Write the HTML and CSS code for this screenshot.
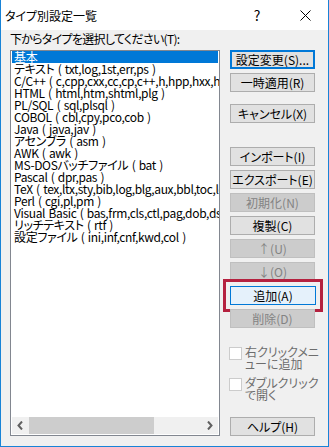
FILE: index.html
```html
<!DOCTYPE html>
<html lang="ja">
<head>
    <meta charset="UTF-8">
    <title>タイプ別設定一覧</title>
    <link rel="stylesheet" href="styles.css">
</head>
<body>
<div class="dialog">
    <div class="titlebar">
        <span class="title">タイプ別設定一覧</span>
        <span class="title-help">?</span>
        <span class="title-close">
            <svg width="11" height="11" viewBox="0 0 11 11"><path d="M0.5 0.5 L10.5 10.5 M10.5 0.5 L0.5 10.5" stroke="#000" stroke-width="1" fill="none"/></svg>
        </span>
    </div>

    <div class="content">
        <div class="left">
            <div class="label">下からタイプを選択してください(T):</div>
            <div class="listbox">
                <ul class="items">
                    <li class="selected">基本</li>
                    <li>テキスト ( txt,log,1st,err,ps )</li>
                    <li>C/C++ ( c,cpp,cxx,cc,cp,c++,h,hpp,hxx,hh,inl )</li>
                    <li>HTML ( html,htm,shtml,plg )</li>
                    <li>PL/SQL ( sql,plsql )</li>
                    <li>COBOL ( cbl,cpy,pco,cob )</li>
                    <li>Java ( java,jav )</li>
                    <li>アセンブラ ( asm )</li>
                    <li>AWK ( awk )</li>
                    <li>MS-DOSバッチファイル ( bat )</li>
                    <li>Pascal ( dpr,pas )</li>
                    <li>TeX ( tex,ltx,sty,bib,log,blg,aux,bbl,toc,lof,lot )</li>
                    <li>Perl ( cgi,pl,pm )</li>
                    <li>Visual Basic ( bas,frm,cls,ctl,pag,dob,dsr )</li>
                    <li>リッチテキスト ( rtf )</li>
                    <li>設定ファイル ( ini,inf,cnf,kwd,col )</li>
                </ul>
                <div class="hscroll">
                    <span class="arrow">
                        <svg width="7" height="9" viewBox="0 0 7 9"><path d="M5 0.5 L1.5 4.5 L5 8.5" stroke="#606060" stroke-width="2" fill="none"/></svg>
                    </span>
                    <div class="track"><div class="thumb"></div></div>
                    <span class="arrow">
                        <svg width="7" height="9" viewBox="0 0 7 9"><path d="M2 0.5 L5.5 4.5 L2 8.5" stroke="#606060" stroke-width="2" fill="none"/></svg>
                    </span>
                </div>
            </div>
        </div>

        <div class="side">
            <button class="btn default">設定変更(S)...</button>
            <button class="btn">一時適用(R)</button>
            <button class="btn gap-s">キャンセル(X)</button>

            <button class="btn gap-l">インポート(I)</button>
            <button class="btn">エクスポート(E)</button>
            <button class="btn" disabled>初期化(N)</button>
            <button class="btn">複製(C)</button>
            <button class="btn" disabled>↑(U)</button>
            <button class="btn" disabled>↓(O)</button>
            <div class="marked">
                <button class="btn focused">追加(A)</button>
            </div>
            <button class="btn" disabled>削除(D)</button>

            <label class="check">
                <span class="box"></span>
                <span class="check-text">右クリックメニ<br>ューに追加</span>
            </label>
            <label class="check">
                <span class="box"></span>
                <span class="check-text">ダブルクリック<br>で開く</span>
            </label>

            <button class="btn help">ヘルプ(H)</button>
        </div>
    </div>
</div>
</body>
</html>
```

FILE: styles.css
```css
* {
    box-sizing: border-box;
}

html, body {
    margin: 0;
    padding: 0;
}

body {
    font-family: "Noto Sans CJK JP", "Noto Sans", sans-serif;
    font-size: 12px;
    font-feature-settings: "palt";
    color: #000;
    background: #fff;
}

.dialog {
    width: 329px;
    height: 447px;
    background: #f0f0f0;
    border: 1px solid #1883d7;
    border-top: none;
    display: flex;
    flex-direction: column;
}

/* title bar */
.titlebar {
    height: 30px;
    background: #fff;
    display: flex;
    align-items: center;
    padding-left: 4px;
}

.title {
    font-size: 12px;
    flex: 1;
}

.title-help {
    font-size: 14px;
    width: 46px;
    text-align: center;
    margin-right: 2px;
}

.title-close {
    width: 46px;
    display: flex;
    justify-content: center;
}

/* main area */
.content {
    flex: 1;
    display: flex;
    padding-left: 9px;
}

.left {
    width: 210px;
    display: flex;
    flex-direction: column;
}

.label {
    line-height: 16px;
    padding-top: 1px;
    margin-bottom: 3px;
    white-space: nowrap;
    letter-spacing: -0.7px;
}

.listbox {
    height: 386px;
    border: 1px solid #828790;
    background: #fff;
    display: flex;
    flex-direction: column;
}

.items {
    list-style: none;
    margin: 0;
    padding: 0 1px;
    flex: 1;
    overflow: hidden;
}

.items li {
    height: 12px;
    line-height: 12px;
    padding-left: 2px;
    white-space: nowrap;
    letter-spacing: -0.35px;
    word-spacing: 1px;
}

.items li.selected {
    background: #0078d7;
    color: #fff;
}

.hscroll {
    height: 17px;
    display: flex;
    background: #f0f0f0;
    margin: 0 1px 1px 1px;
}

.hscroll .arrow {
    width: 17px;
    display: flex;
    align-items: center;
    justify-content: center;
}

.track {
    flex: 1;
    display: flex;
}

.thumb {
    width: 125px;
    background: #cdcdcd;
}

/* right column */
.side {
    width: 87px;
    margin-left: 10px;
    padding-top: 20px;
    display: flex;
    flex-direction: column;
}

.btn {
    font-family: inherit;
    font-size: 12px;
    font-feature-settings: "palt";
    height: 19px;
    width: 85px;
    padding: 0;
    margin: 0 0 4px 0;
    background: #e1e1e1;
    border: 1px solid #adadad;
    color: #000;
    line-height: 15px;
}

.btn.default {
    border: 2px solid #0078d7;
}

.btn.focused {
    background: #e5f1fb;
    border: 1px solid #0078d7;
    width: 86px;
    margin: 0;
}

.btn:disabled {
    background: #cccccc;
    border-color: #bfbfbf;
    color: #838383;
}

.btn.gap-s {
    margin-top: 8px;
}

.btn.gap-l {
    margin-top: 20px;
}

.marked {
    outline: 3px solid #b5213f;
    outline-offset: 4px;
    width: 86px;
    margin: 1px 0 4px 0;
}

.check {
    display: flex;
    margin-top: 14px;
    color: #6d6d6d;
    line-height: 12px;
}

.check + .check {
    margin-top: 7px;
}

.box {
    width: 13px;
    height: 13px;
    border: 1px solid #cccccc;
    background: #fff;
    margin: 1px 3px 0 -1px;
    flex: none;
}

.check-text {
    width: 74px;
    white-space: nowrap;
}

.btn.help {
    margin-top: 16px;
}
```
